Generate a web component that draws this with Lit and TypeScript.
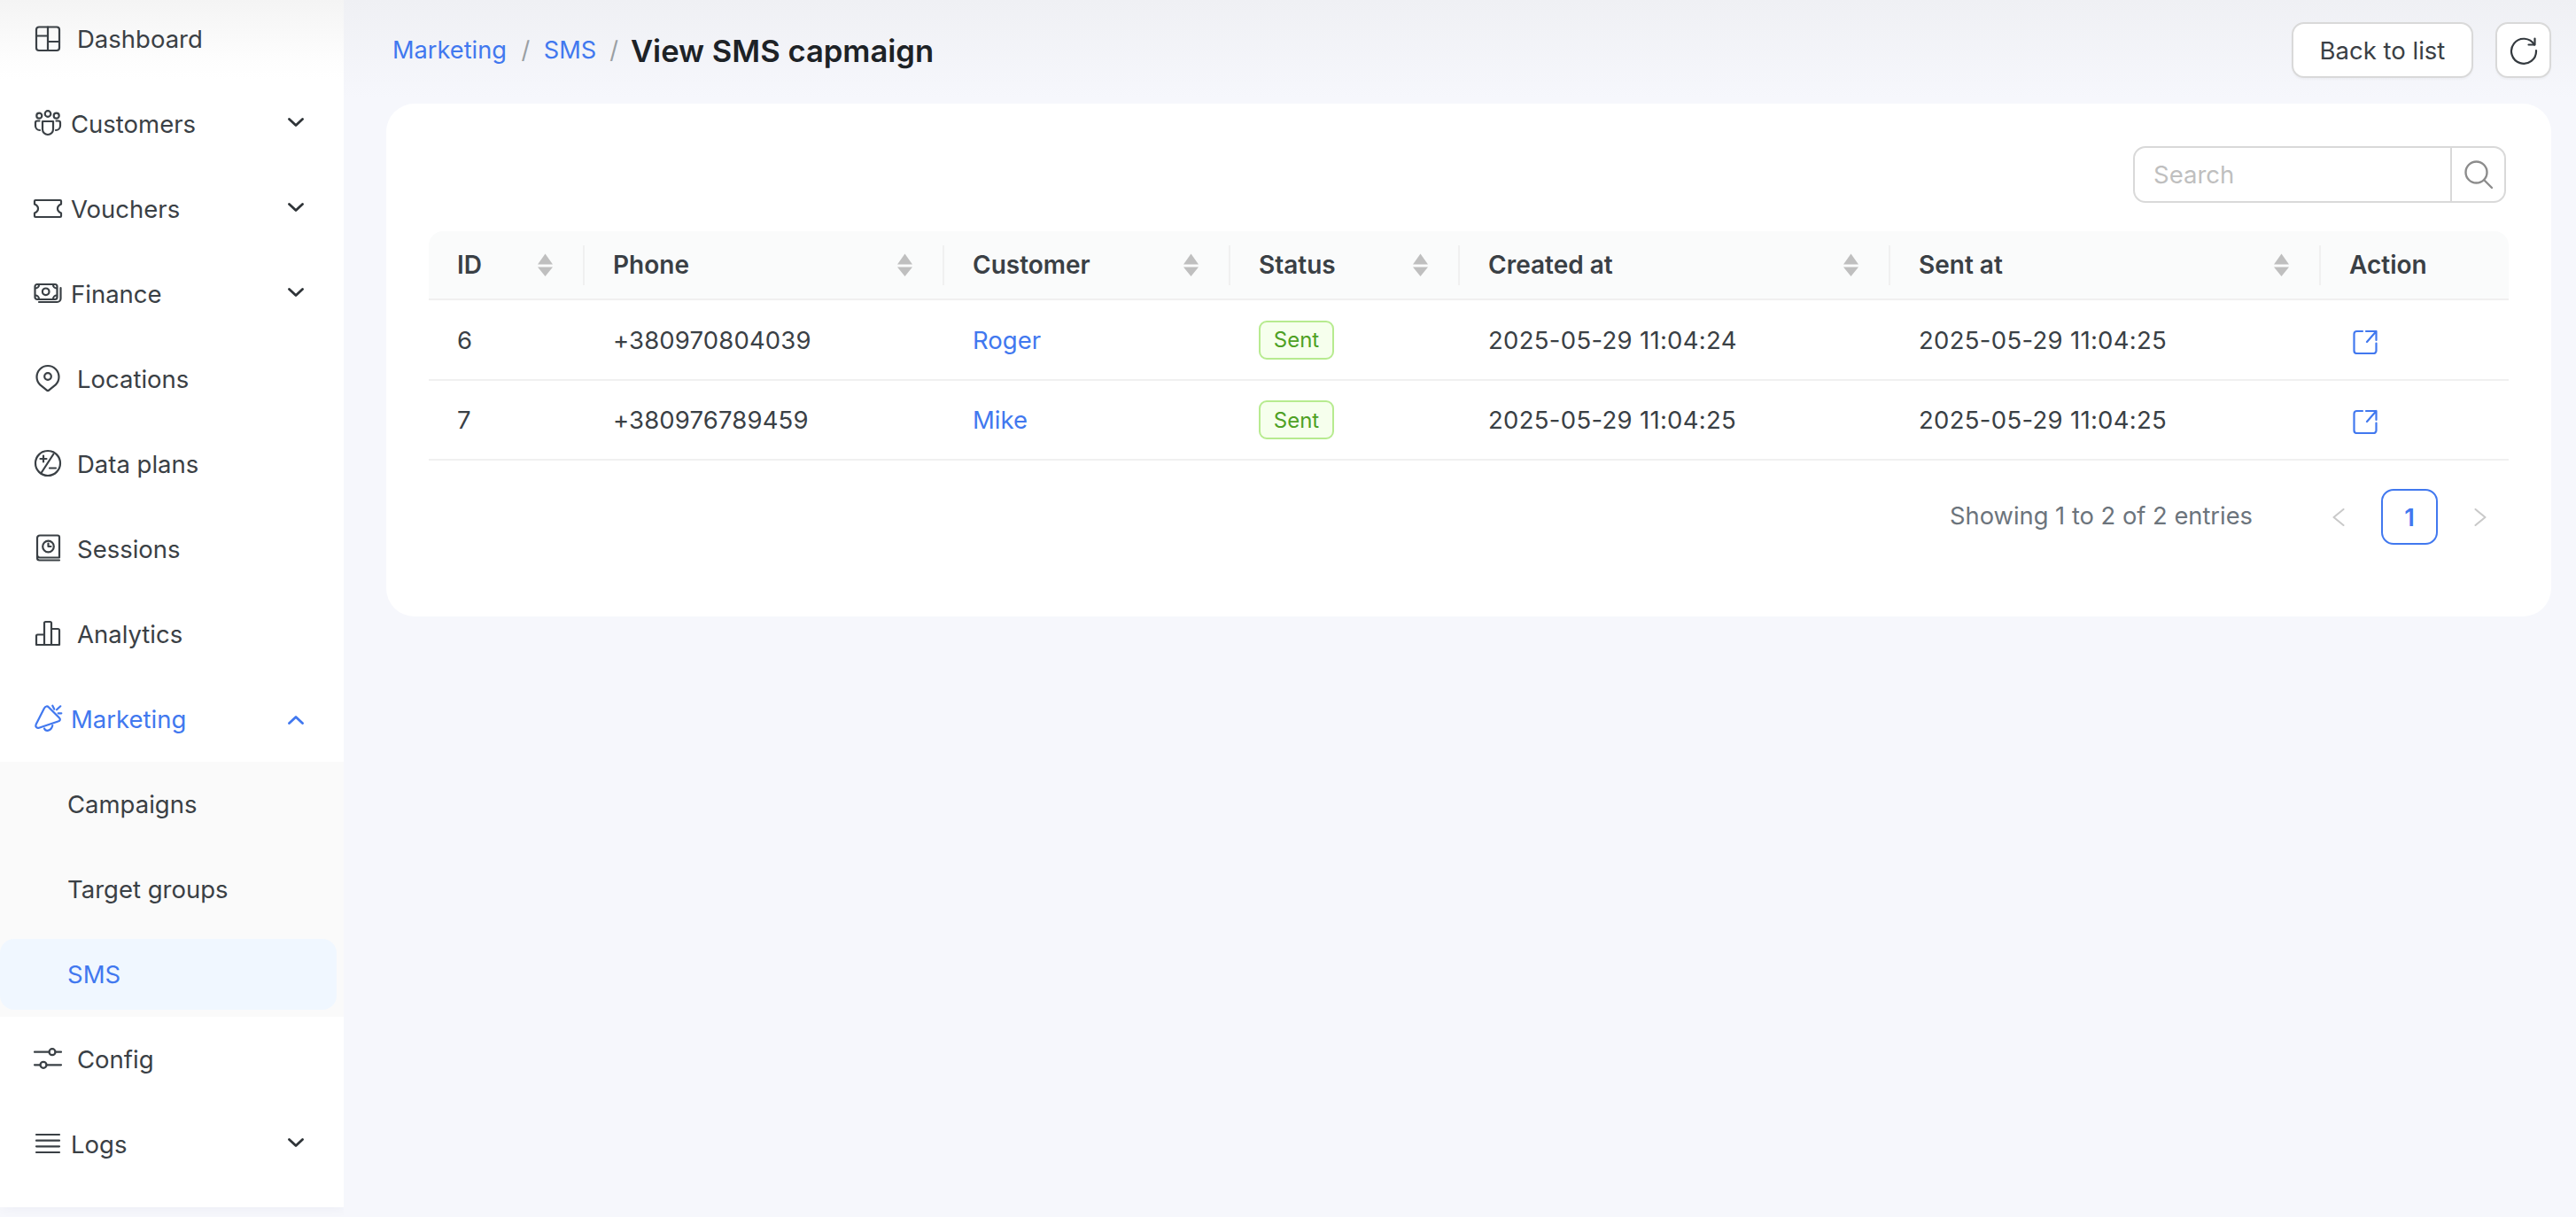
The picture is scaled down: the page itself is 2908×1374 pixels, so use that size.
import { LitElement, html, css, svg } from "lit";
import { customElement } from "lit/decorators.js";

const ic = (c: unknown) => html`<svg class="ic" viewBox="0 0 36 36" width="36" height="36" fill="none" stroke="currentColor" stroke-width="2.200" stroke-linecap="round" stroke-linejoin="round">${c}</svg>`;

const ICONS: Record<string, unknown> = {
  dashboard: svg`<rect x="5" y="4.500" width="26" height="26.500" rx="3"/><path d="M18 4.500V31M5 14.500h13M18 21h13"/>`,
  customers: svg`<circle cx="8.300" cy="8.700" r="3"/><circle cx="18" cy="6.500" r="3.300"/><circle cx="27.700" cy="8.700" r="3"/><path d="M12 15h12v9a6 6 0 0 1-12 0z"/><path d="M8.500 14.500H6a2 2 0 0 0-2 2v3.500a5 5 0 0 0 5 5M27.500 14.500H30a2 2 0 0 1 2 2v3.500a5 5 0 0 1-5 5"/>`,
  vouchers: svg`<path d="M4 8h28a1 1 0 0 1 1 1v3.500c-2.500 1-4 3-4 5s1.500 4 4 5V26a1 1 0 0 1-1 1H4a1 1 0 0 1-1-1v-3.500c2.500-1 4-3 4-5s-1.500-4-4-5V9a1 1 0 0 1 1-1z"/>`,
  finance: svg`<rect x="3.500" y="7" width="25" height="17" rx="2.500"/><circle cx="15.700" cy="15.300" r="3.800"/><path d="M8 7.500a4 4 0 0 1-4 4M24 7.500a4 4 0 0 0 4 4M8 23.500a4 4 0 0 0-4-4M24 23.500a4 4 0 0 1 4-4"/><path d="M32.500 11v12a4 4 0 0 1-4 4H8"/>`,
  locations: svg`<path d="M9.200 24.400A12.500 12.500 0 1 1 26.800 24.400L19.400 30.400a2 2 0 0 1-2.800 0Z"/><circle cx="18" cy="15" r="3.800"/>`,
  plans: svg`<circle cx="18" cy="17" r="14"/><path d="M24.500 6.500L10.500 28M13 8.500v7M9.500 12h7M20 22.500h7"/>`,
  sessions: svg`<path d="M9 2.500h20a2 2 0 0 1 2 2v23H9a3 3 0 0 1-3-3V5.500a3 3 0 0 1 3-3z"/><path d="M6 25v3a2.500 2.500 0 0 0 2.500 2.500H31"/><circle cx="18.500" cy="15" r="6.300"/><path d="M18.500 11.500V15h3"/>`,
  analytics: svg`<path d="M5 30V20a1.500 1.500 0 0 1 1.500-1.500H14V5.500A1.500 1.500 0 0 1 15.500 4h5A1.500 1.500 0 0 1 22 5.500V12h7.500a1.500 1.500 0 0 1 1.500 1.500V30ZM14 18.500V30M22 12V30"/>`,
  marketing: svg`<path d="M14 5.500c1.500-2.500 3.500-2.500 5-1L31 16.500c1.500 1.500 1 3.500-1.500 4L8 27.700c-3 .8-4.300-1.500-3.300-4z"/><path d="M14 28.500c1.500 3.500 7.500 3.500 9.300-3.500M23.300 2.700l2 4M32.300 3.300L28 7.300M29.700 11.300h3.600"/>`,
  config: svg`<path d="M3 9.700h16.500M26.500 9.700H33M3 24.300h6.500M16.500 24.300H33"/><circle cx="23" cy="9.700" r="3.500"/><circle cx="13" cy="24.300" r="3.500"/>`,
  logs: svg`<path d="M5 7h26M5 13.700h26M5 20.300h26M5 27h26"/>`,
};

const chevron = (up = false) => html`<svg class="chev ${up ? "up" : ""}" viewBox="0 0 18 10" width="18" height="10" fill="none" stroke="currentColor" stroke-width="2.800" stroke-linecap="round" stroke-linejoin="round"><path d=${up ? "M1.500 8.500L9 1.500l7.500 7" : "M1.500 1.500L9 8.500l7.500-7"}/></svg>`;

const sortIcon = html`<svg class="sort" viewBox="0 0 17 26" width="17" height="26" fill="#bfbfbf"><path d="M8.500 0.500L17 12.500H0z"/><path d="M0 15.500h17L8.500 26z"/></svg>`;

const openIcon = html`<svg class="open" viewBox="0 0 28 28" width="28" height="28" fill="none" stroke="currentColor" stroke-width="2.200" stroke-linecap="round" stroke-linejoin="round"><path d="M11 2H4.500A3 3 0 0 0 1.500 5v19a3 3 0 0 0 3 3h19a3 3 0 0 0 3-3v-8.500"/><path d="M15 2h11.500v10M26.500 2L16 14"/></svg>`;

type Item = { label: string; icon: string; expand?: boolean };
const TOP: Item[] = [
  { label: "Dashboard", icon: "dashboard" },
  { label: "Customers", icon: "customers", expand: true },
  { label: "Vouchers", icon: "vouchers", expand: true },
  { label: "Finance", icon: "finance", expand: true },
  { label: "Locations", icon: "locations" },
  { label: "Data plans", icon: "plans" },
  { label: "Sessions", icon: "sessions" },
  { label: "Analytics", icon: "analytics" },
];
const COLS = [
  { t: "ID", w: 176, s: true },
  { t: "Phone", w: 406, s: true },
  { t: "Customer", w: 323, s: true },
  { t: "Status", w: 259, s: true },
  { t: "Created at", w: 486, s: true },
  { t: "Sent at", w: 486, s: true },
  { t: "Action", w: 212, s: false },
];
const ROWS = [
  { id: "6", phone: "+380970804039", name: "Roger", created: "2025-05-29 11:04:24", sent: "2025-05-29 11:04:25" },
  { id: "7", phone: "+380976789459", name: "Mike", created: "2025-05-29 11:04:25", sent: "2025-05-29 11:04:25" },
];

@customElement("app-root")
export class AppRoot extends LitElement {
  static styles = css`
    :host { display: block; width: 2908px; height: 1374px; overflow: hidden; font-family: "Inter", "Liberation Sans", sans-serif; font-size: 27.500px; color: #3a4045; background: #f6f7fc; }
    * { box-sizing: border-box; }
    .page { display: flex; height: 1374px; align-items: flex-start; }
    .side { width: 388px; height: 1363px; flex: none; background: linear-gradient(#f4f4f4, #fdfdfd 66px, #fff 90px); box-shadow: 2px 0 14px rgba(30,40,80,.05); overflow: hidden; }
    .row { height: 96px; display: flex; align-items: center; padding: 0 45px 0 36px; gap: 15px; }
    .row.first { height: 88px; margin-bottom: 4px; }
    .row.exp { gap: 8px; }
    .row.active { color: #4178ef; }
    .ic { flex: none; display: block; }
    .chev { margin-left: auto; flex: none; position: relative; top: -2px; color: #2f3438; }
    .chev.up { top: 1px; color: #4178ef; }
    .sub { background: #fafafa; padding: 8px 8px 8px 0; display: flex; flex-direction: column; gap: 16px; }
    .subrow { height: 80px; padding-left: 76px; display: flex; align-items: center; border-radius: 16px; }
    .subrow.active { background: #f0f7ff; color: #4178ef; }

    .main { flex: 1; min-width: 0; height: 1374px; padding: 25px 28px 0 48px; background: linear-gradient(#eff0f4, #f6f7fc 110px); }
    .head { height: 63px; margin-bottom: 29px; display: flex; align-items: center; padding-left: 7px; }
    .crumbs { display: flex; align-items: center; flex: 1; font-size: 27.200px; }
    .crumbs a { color: #4178ef; }
    .crumbs i { font-style: normal; color: #9a9fa3; margin: 0 15.500px 0 16.500px; }
    .crumbs i.last { margin: 0 14px 0 15px; }
    .crumbs b { font-weight: 600; font-size: 34.600px; color: #1d2226; }
    .btn { height: 63px; border: 2px solid #d9d9d9; border-radius: 14px; background: #fff; box-shadow: 0 2px 2px rgba(0,0,0,.03); display: flex; align-items: center; justify-content: center; color: #3a4045; }
    .btn.text { width: 205px; margin-right: 25px; }
    .btn.icon { width: 63px; }
    .card { height: 579px; background: #fff; border-radius: 32px; padding: 48px 48px 0 48px; }
    .tools { display: flex; justify-content: flex-end; padding-right: 3px; margin-bottom: 32px; }
    .search { width: 421px; height: 64px; border: 2px solid #d9d9d9; border-radius: 14px; display: flex; align-items: stretch; }
    .search .ph { flex: 1; display: flex; align-items: center; padding-left: 21px; color: #bfbfbf; }
    .search .go { width: 61px; flex: none; border-left: 2px solid #d9d9d9; display: flex; align-items: center; justify-content: center; color: #8c8c8c; }
    table { border-collapse: separate; border-spacing: 0; table-layout: fixed; width: 2348px; }
    th { padding: 0; height: 78px; background: #fafbfb; border-bottom: 2px solid #f0f0f0; font-weight: 600; font-size: 28px; text-align: left; }
    th:first-child { border-top-left-radius: 16px; }
    th:last-child { border-top-right-radius: 16px; }
    .th { height: 45px; display: flex; align-items: center; justify-content: space-between; padding: 0 34px 0 32px; border-right: 2px solid #f0f0f0; }
    th:last-child .th { border-right: 0; }
    td { padding: 0 32px; height: 91px; border-bottom: 2px solid #f0f0f0; }
    tr:last-child td { height: 90px; }
    td a { color: #4178ef; }
    .ph-no { letter-spacing: .15px; }
    .dt { letter-spacing: .3px; }
    .tag { display: inline-flex; width: 85px; height: 44px; align-items: center; justify-content: center; background: #f6ffed; border: 2px solid #b7eb8f; border-radius: 9px; color: #4ea125; font-size: 24px; vertical-align: middle; }
    .open { display: block; color: #4178ef; position: relative; top: 2px; margin-left: 4px; }
    .pager { display: flex; align-items: center; justify-content: flex-end; margin-top: 32px; padding-right: 1px; height: 63px; }
    .info { color: #6c747c; margin: 0 66px 3px 0; font-size: 27.300px; }
    .nav { width: 62px; height: 63px; display: flex; align-items: center; justify-content: center; color: #c9c9c9; }
    .pg { width: 64px; height: 63px; margin: 0 17px; border: 2px solid #4178ef; border-radius: 14px; display: flex; align-items: center; justify-content: center; color: #4178ef; font-weight: 600; }
  `;

  render() {
    return html`<div class="page">
      <nav class="side">
        ${TOP.map((it, i) => html`<div class="row ${i === 0 ? "first" : ""} ${it.expand ? "exp" : ""}">${ic(ICONS[it.icon])}<span>${it.label}</span>${it.expand ? chevron() : ""}</div>`)}
        <div class="row exp active">${ic(ICONS.marketing)}<span>Marketing</span>${chevron(true)}</div>
        <div class="sub">
          <div class="subrow">Campaigns</div>
          <div class="subrow">Target groups</div>
          <div class="subrow active">SMS</div>
        </div>
        <div class="row">${ic(ICONS.config)}<span>Config</span></div>
        <div class="row exp">${ic(ICONS.logs)}<span>Logs</span>${chevron()}</div>
      </nav>
      <main class="main">
        <header class="head">
          <div class="crumbs"><a>Marketing</a><i>/</i><a>SMS</a><i class="last">/</i><b>View SMS capmaign</b></div>
          <div class="btn text">Back to list</div>
          <div class="btn icon"><svg viewBox="0 0 32 32" width="32" height="32" fill="none" stroke="#33393e" stroke-width="2.200" stroke-linecap="round" stroke-linejoin="round"><path d="M28 9.500A14 14 0 1 0 30 16"/><path d="M28.500 2.500v7h-7"/></svg></div>
        </header>
        <section class="card">
          <div class="tools"><div class="search"><div class="ph">Search</div><div class="go"><svg viewBox="0 0 36 36" width="36" height="36" fill="none" stroke="currentColor" stroke-width="2.400" stroke-linecap="round"><circle cx="15.500" cy="15.500" r="12"/><path d="M24.500 24.500l8.500 8.500"/></svg></div></div></div>
          <table>
            <colgroup>${COLS.map((c) => html`<col style="width:${c.w}px" />`)}</colgroup>
            <thead><tr>${COLS.map((c) => html`<th><div class="th"><span>${c.t}</span>${c.s ? sortIcon : ""}</div></th>`)}</tr></thead>
            <tbody>${ROWS.map((r) => html`<tr>
              <td>${r.id}</td><td class="ph-no">${r.phone}</td><td><a>${r.name}</a></td>
              <td><span class="tag">Sent</span></td>
              <td class="dt">${r.created}</td><td class="dt">${r.sent}</td><td>${openIcon}</td>
            </tr>`)}</tbody>
          </table>
          <div class="pager">
            <span class="info">Showing 1 to 2 of 2 entries</span>
            <div class="nav"><svg viewBox="0 0 14 20" width="14" height="20" fill="none" stroke="currentColor" stroke-width="2" stroke-linecap="round" stroke-linejoin="round"><path d="M12.500 1L1.500 10l11 9"/></svg></div>
            <div class="pg">1</div>
            <div class="nav"><svg viewBox="0 0 14 20" width="14" height="20" fill="none" stroke="currentColor" stroke-width="2" stroke-linecap="round" stroke-linejoin="round"><path d="M1.500 1l11 9-11 9"/></svg></div>
          </div>
        </section>
      </main>
    </div>`;
  }
}
